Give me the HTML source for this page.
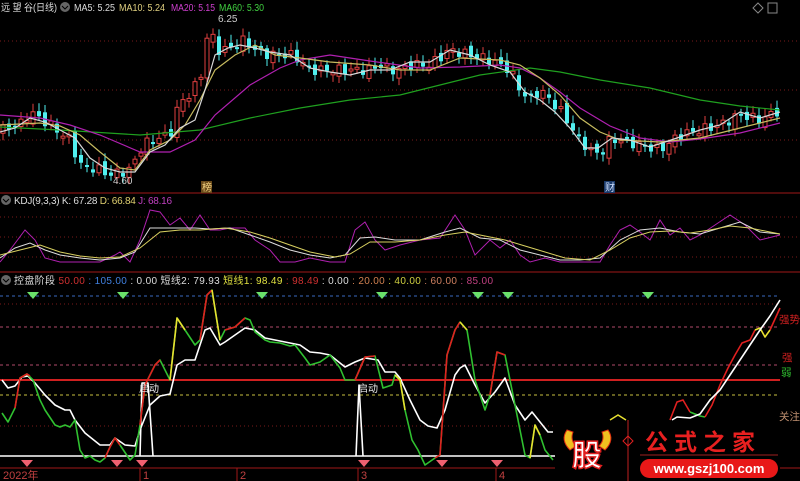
<!DOCTYPE html>
<html><head><meta charset="utf-8"><style>
html,body{margin:0;padding:0;background:#000;}
body{width:800px;height:481px;overflow:hidden;position:relative;font-family:"Liberation Sans","Noto Sans CJK SC",sans-serif;}
svg{position:absolute;left:0;top:0}
</style></head><body>
<svg width="800" height="481" viewBox="0 0 800 481" font-family="Liberation Sans, Noto Sans CJK SC, sans-serif">
<g stroke="#7a1a1a" stroke-dasharray="1,3" stroke-width="1">
<line x1="0" y1="41" x2="800" y2="41"/><line x1="0" y1="90" x2="800" y2="90"/><line x1="0" y1="140" x2="800" y2="140"/>
<line x1="0" y1="217" x2="800" y2="217"/><line x1="0" y1="237" x2="800" y2="237"/><line x1="0" y1="257" x2="800" y2="257"/>
<line x1="0" y1="304" x2="780" y2="304"/><line x1="0" y1="426" x2="780" y2="426"/>
</g>
<g stroke="#b04a6a" stroke-dasharray="3,3"><line x1="0" y1="327" x2="780" y2="327"/><line x1="0" y1="365" x2="780" y2="365"/></g>
<line x1="0" y1="296" x2="780" y2="296" stroke="#3a6ac0" stroke-dasharray="3,3"/>
<line x1="0" y1="395" x2="780" y2="395" stroke="#c8c040" stroke-dasharray="3,3"/>
<line x1="0" y1="380" x2="780" y2="380" stroke="#d02020" stroke-width="2"/>
<line x1="0" y1="456" x2="560" y2="456" stroke="#fff" stroke-width="1.5"/>
<line x1="0" y1="193" x2="800" y2="193" stroke="#a01818"/>
<line x1="0" y1="272" x2="800" y2="272" stroke="#a01818"/>
<line x1="0" y1="468" x2="800" y2="468" stroke="#a01818"/>
<g stroke="#a01818"><line x1="140" y1="468" x2="140" y2="481"/><line x1="237" y1="468" x2="237" y2="481"/><line x1="358" y1="468" x2="358" y2="481"/><line x1="496" y1="468" x2="496" y2="481"/></g>
<g fill="#c04040" font-size="11"><text x="3" y="479">2022年</text><text x="143" y="479">1</text><text x="240" y="479">2</text><text x="361" y="479">3</text><text x="499" y="479">4</text></g>

<g id="candles"></g>
<g fill="none" stroke-width="1.2">
<polyline stroke="#1fa01f" points="0,127 60,130 140,135 200,130 250,118 300,108 350,100 400,95 440,85 480,75 530,68 560,72 600,80 650,88 700,100 740,106 780,110"/>
<polyline stroke="#b020b0" points="0,115 40,118 70,125 100,135 140,152 170,152 195,140 215,115 250,85 280,68 300,60 330,55 370,61 420,68 460,67 500,65 520,68 540,78 560,92 580,108 610,126 640,138 670,142 700,139 740,133 780,123"/>
<polyline stroke="#c8bc60" points="0,125 20,124 40,123 60,126 80,135 100,152 120,168 135,170 150,150 170,140 185,125 200,100 215,70 235,55 255,45 275,55 300,58 330,62 370,65 400,70 430,70 460,58 500,60 520,65 540,78 560,95 580,118 600,132 620,140 660,142 700,138 740,128 780,118"/>
<polyline stroke="#d8d8d8" points="0,132 15,128 30,118 45,122 60,130 75,138 90,158 105,168 120,172 135,172 150,152 165,145 180,128 195,120 205,90 215,55 228,48 240,45 255,48 270,52 290,55 310,68 330,72 350,75 370,70 390,70 410,62 430,62 450,50 470,55 490,65 510,72 525,92 540,100 555,112 570,128 585,148 598,148 612,138 630,140 650,147 680,137 700,130 720,125 740,112 760,118 780,112"/>
</g>
<text x="218" y="22" fill="#ccc" font-size="10">6.25</text>
<text x="113" y="184" fill="#ccc" font-size="10">4.60</text>
<rect x="201" y="181" width="11" height="12" fill="#6a4a1a"/><text x="202" y="191" fill="#f0d080" font-size="10">榜</text>
<rect x="604" y="181" width="11" height="12" fill="#1a3a6a"/><text x="605" y="191" fill="#d0e0ff" font-size="10">财</text>

<g font-size="10">
<text x="1" y="11" fill="#ddd" textLength="56" lengthAdjust="spacingAndGlyphs">远 望 谷(日线)</text>
<circle cx="65" cy="7" r="5" fill="#666"/><path d="M62 6 L65 9 L68 6" stroke="#000" fill="none"/>
<text x="74" y="11" fill="#ddd" textLength="41" lengthAdjust="spacingAndGlyphs">MA5: 5.25</text>
<text x="119" y="11" fill="#e0d080" textLength="46" lengthAdjust="spacingAndGlyphs">MA10: 5.24</text>
<text x="171" y="11" fill="#d040d0" textLength="44" lengthAdjust="spacingAndGlyphs">MA20: 5.15</text>
<text x="219" y="11" fill="#40d040" textLength="45" lengthAdjust="spacingAndGlyphs">MA60: 5.30</text>
<circle cx="6" cy="200" r="5" fill="#666"/><path d="M3 199 L6 202 L9 199" stroke="#000" fill="none"/>
<text x="14" y="204" fill="#ddd" textLength="158" lengthAdjust="spacing">KDJ(9,3,3)  K: 67.28  <tspan fill="#e0d070">D: 66.84</tspan>  <tspan fill="#c040c0">J: 68.16</tspan></text>
<circle cx="6" cy="280" r="5" fill="#666"/><path d="M3 279 L6 282 L9 279" stroke="#000" fill="none"/>
<text x="14" y="284" fill="#ddd" textLength="479" lengthAdjust="spacing">控盘阶段 <tspan fill="#d03030">50.00</tspan> <tspan fill="#4080e0">: 105.00</tspan>    <tspan fill="#ddd">: 0.00  短线2: 79.93</tspan> <tspan fill="#e0e040">短线1: 98.49</tspan>  <tspan fill="#d03030">: 98.49</tspan>  <tspan fill="#ddd">: 0.00</tspan>    <tspan fill="#d08050">: 20.00</tspan>  <tspan fill="#d0d040">: 40.00</tspan> <tspan fill="#d08060">: 60.00</tspan>   <tspan fill="#c04080">: 85.00</tspan></text>
</g>
<rect x="768" y="3" width="9" height="10" fill="none" stroke="#888"/><path d="M758 3 L763 8 L758 13 L753 8Z" fill="none" stroke="#888"/>

<g fill="none" stroke-width="1">
<polyline stroke="#b020b0" points="0,262 10,250 25,230 35,240 45,258 60,262 80,262 100,262 115,255 120,252 130,262 140,240 150,210 160,212 170,225 180,218 190,230 200,215 210,230 220,230 230,228 245,228 255,240 270,250 280,262 295,262 310,258 330,262 345,262 355,230 365,222 375,240 385,250 400,245 420,240 440,238 455,215 465,230 475,255 490,240 500,248 510,240 520,255 530,262 545,258 560,262 580,262 600,262 610,245 620,230 630,225 640,232 650,240 660,220 670,235 680,228 690,240 700,235 715,225 730,215 745,225 760,240 780,235"/>
<polyline stroke="#ddd" points="0,258 15,248 30,243 45,250 60,255 80,258 100,260 120,258 135,252 150,228 165,228 178,228 195,228 210,229 230,228 250,235 270,242 290,250 310,255 330,258 345,255 360,238 375,237 395,240 420,240 445,232 460,228 480,238 500,240 520,250 540,255 560,260 580,260 600,258 620,240 640,230 660,228 680,232 700,234 720,228 740,222 760,232 780,234"/>
<polyline stroke="#d8d060" points="0,255 20,250 40,245 60,252 80,256 100,258 120,257 140,248 160,232 180,230 200,230 225,228 250,232 270,238 290,245 310,252 335,257 350,254 370,242 395,242 420,240 445,235 465,232 485,236 505,240 525,246 545,252 565,258 590,260 610,250 630,238 650,232 670,231 690,233 710,230 730,226 750,228 770,232 780,234"/>
</g>

<g fill="#5ad85a"><g id="gd"></g></g>
<g fill="none" stroke-width="1.6" stroke-linejoin="round">
<polyline stroke="#fff" points="140,456 142,383 148,383 153,456"/>
<polyline stroke="#fff" points="356,456 359,385 363,456"/>
<polyline stroke="#fff" points="2,380 8,388 15,386 22,377 28,376 35,383 45,395 55,405 65,410 70,410 75,420 85,433 100,445 110,445 115,438 125,445 135,446 140,430 150,405 160,396 170,394 177,365 185,360 195,360 205,330 210,328 220,345 225,342 235,335 245,328 255,330 265,338 275,340 290,343 300,345 310,352 320,353 330,355 345,367 355,362 365,358 378,360 385,372 395,372 400,378 410,400 420,420 428,426 437,428 445,410 455,375 460,368 465,365 475,385 485,403 495,392 505,378 515,405 525,420 532,412 540,422 548,432 553,432"/>
<polyline stroke="#30c030" points="2,413 8,422 15,408 20,378 27,374 33,380 40,400 45,410 55,425 60,427 65,425 70,427 75,420 80,450 85,458 90,456 95,460 100,462 105,458 110,447 115,438 120,445 130,460 135,455 140,425 145,385 155,365 160,360 170,380 177,318 185,330 195,345 200,340 207,295 212,290 220,340 225,330 235,327 245,318 250,320 255,332 265,340 270,342 280,343 290,346 295,345 305,358 310,365 320,362 330,355 340,368 345,380 355,380 365,357 375,356 383,388 392,385 395,375 400,380 405,410 412,440 418,450 425,465 435,458 440,455 447,355 455,330 460,322 467,330 475,380 485,410 490,395 497,352 505,355 510,380 518,420 525,455 530,458 535,425 540,435 545,450 553,460"/>
<polyline stroke="#e02020" points="15,408 20,378 27,374 30,376"/>
<polyline stroke="#e02020" points="105,458 110,447 115,438 120,445"/>
<polyline stroke="#e02020" points="140,425 145,385 155,365 160,360"/>
<polyline stroke="#e8e030" points="170,380 177,318 185,330"/>
<polyline stroke="#e02020" points="200,340 207,295 212,290"/>
<polyline stroke="#e8e030" points="212,290 220,340"/>
<polyline stroke="#e02020" points="225,330 235,327 245,318"/>
<polyline stroke="#e02020" points="355,380 365,357 375,356"/>
<polyline stroke="#e02020" points="435,458 440,455 447,355 455,330 460,322"/>
<polyline stroke="#e8e030" points="460,322 467,330"/>
<polyline stroke="#e8e030" points="395,375 400,380 405,410"/>
<polyline stroke="#e02020" points="490,395 497,352 505,355"/>
<polyline stroke="#e8e030" points="530,458 535,425 540,435"/>
<polyline stroke="#e02020" points="670,420 677,402 683,400 690,412"/>
<polyline stroke="#30c030" points="690,412 700,416 705,417"/>
<polyline stroke="#e02020" points="705,417 712,405 720,385 728,368 735,355 742,343 750,340 755,330"/>
<polyline stroke="#e8e030" points="755,330 760,328 765,337 770,330"/>
<polyline stroke="#e02020" points="770,330 780,308"/>
<polyline stroke="#fff" points="672,420 677,417 690,418 700,414 710,400 720,390 730,375 740,360 750,345 760,330 770,316 780,300"/>
</g>
<g font-size="10" fill="#eee"><text x="139" y="392">启动</text><text x="358" y="392">启动</text></g>
<g font-size="10.5"><text x="779" y="323" fill="#d02020">强势</text><text x="782" y="361" fill="#d02020">强</text><text x="781" y="376" fill="#30c030">弱</text><text x="779" y="420" fill="#c09070">关注</text></g>
<g id="rd"></g>

<rect x="555" y="421" width="225" height="60" fill="#000"/>
<rect x="625" y="420" width="40" height="12" fill="#000"/>
<polyline points="610,420 618,415 626,420" fill="none" stroke="#e8e030" stroke-width="1.5"/>
<path d="M567 430 Q560 440 570 450 L576 446 Q570 440 573 432Z" fill="#f0c020" stroke="#e03010"/>
<path d="M608 430 Q615 440 605 450 L599 446 Q605 440 602 432Z" fill="#f0c020" stroke="#e03010"/>
<text x="572" y="466" font-size="30" font-weight="bold" fill="#fff" stroke="#e02020" stroke-width="1.5" font-family="Noto Sans CJK SC, sans-serif">股</text>
<line x1="628" y1="420" x2="628" y2="481" stroke="#c02020"/>
<path d="M628 436 L633 441 L628 446 L623 441Z" fill="none" stroke="#e02020"/>
<line x1="640" y1="455" x2="778" y2="455" stroke="#a02020"/>
<text x="645" y="450" font-size="23" font-weight="bold" fill="#e82020" letter-spacing="6" font-family="Noto Sans CJK SC, sans-serif">公式之家</text>
<rect x="640" y="459" width="138" height="19" rx="9.5" fill="#e81818"/>
<text x="709" y="473" font-size="13" font-weight="bold" fill="#fff" text-anchor="middle">www.gszj100.com</text>
</svg>
<script>
(function(){
var ns="http://www.w3.org/2000/svg";
var pts=[[0,130],[20,125],[30,112],[50,125],[70,140],[80,165],[100,170],[110,175],[130,170],[140,150],[150,140],[170,135],[180,100],[185,100],[200,80],[210,20],[215,50],[225,50],[235,45],[245,40],[255,50],[270,55],[290,55],[300,60],[310,70],[330,70],[350,70],[370,70],[380,65],[390,70],[400,70],[410,65],[430,65],[450,50],[470,55],[490,60],[510,70],[520,90],[530,100],[540,90],[560,110],[570,125],[580,140],[590,150],[600,155],[610,140],[620,140],[640,145],[660,150],[680,135],[700,130],[720,125],[740,115],[760,120],[780,110]];
function f(x){for(var i=1;i<pts.length;i++){if(x<=pts[i][0]){var a=pts[i-1],b=pts[i];return a[1]+(b[1]-a[1])*(x-a[0])/(b[0]-a[0]);}}return 110;}
var g=document.getElementById("candles");var prev=f(0);
for(var x=3;x<=780;x+=6){var c=f(x)+Math.sin(x*1.7)*5;var o=prev+Math.cos(x*2.3)*4;var up=c<o;
var top=Math.min(o,c),h=Math.max(2,Math.abs(o-c));
var col=up?"#e04040":"#50f0f0";
var l=document.createElementNS(ns,"line");l.setAttribute("x1",x);l.setAttribute("x2",x);l.setAttribute("y1",top-3-Math.abs(Math.sin(x))*5);l.setAttribute("y2",top+h+3+Math.abs(Math.cos(x))*4);l.setAttribute("stroke",col);g.appendChild(l);
var r=document.createElementNS(ns,"rect");r.setAttribute("x",x-2);r.setAttribute("y",top);r.setAttribute("width",4);r.setAttribute("height",h);
if(up){r.setAttribute("fill","#000");r.setAttribute("stroke",col);}else r.setAttribute("fill",col);g.appendChild(r);prev=c;}
function dia(p,x,y,c){var q=document.createElementNS(ns,"path");q.setAttribute("d","M"+(x-6)+" "+(y-3)+" L"+(x+6)+" "+(y-3)+" L"+x+" "+(y+4)+"Z");q.setAttribute("fill",c);p.appendChild(q);}
var gd=document.getElementById("gd");[33,123,262,382,478,508,648].forEach(function(x){dia(gd,x,295,"#6ae06a");});
var rd=document.getElementById("rd");[27,117,142,364,442,497].forEach(function(x){dia(rd,x,463,"#f06070");});
})();
</script>
</body></html>
